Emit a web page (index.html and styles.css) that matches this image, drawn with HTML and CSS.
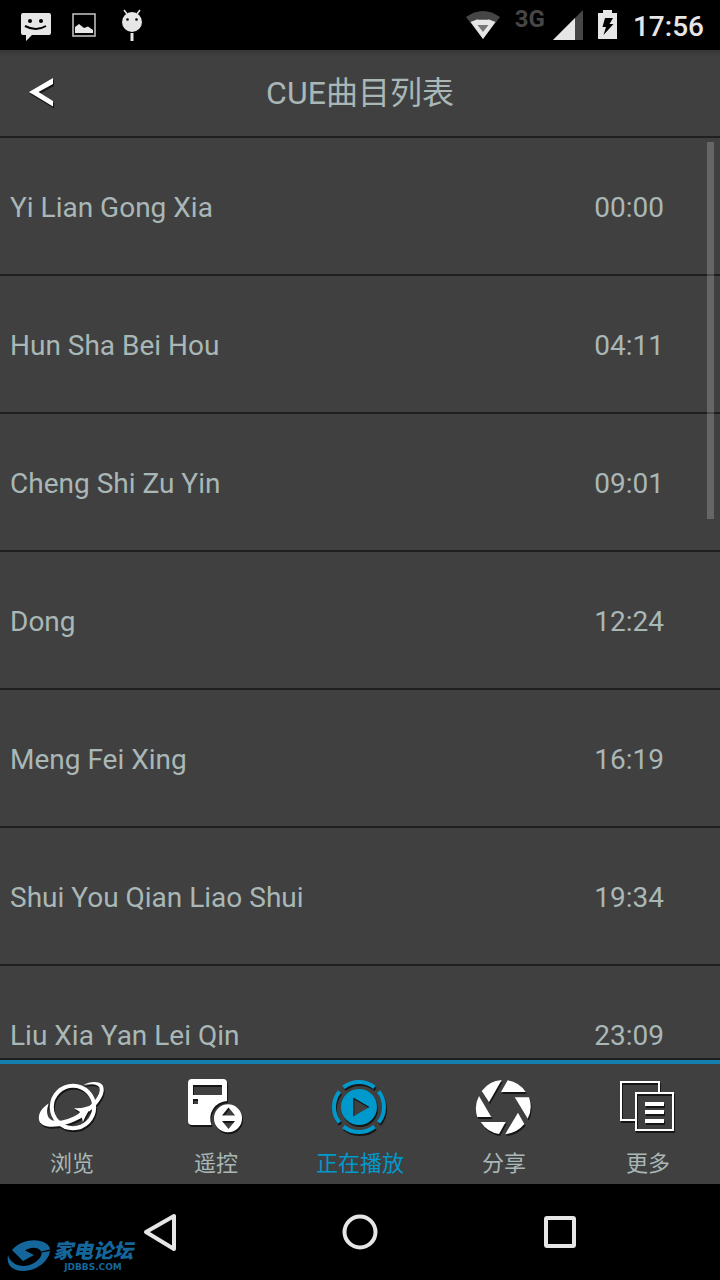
FILE: index.html
```html
<!DOCTYPE html>
<html lang="zh-CN">
<head>
<meta charset="utf-8">
<meta name="viewport" content="width=device-width, initial-scale=1">
<title>CUE曲目列表</title>
<link rel="stylesheet" href="styles.css">
</head>
<body>
<div class="screen">
  <div class="status">
    <div class="status-group">
      <svg width="32" height="30" viewBox="0 0 32 30" aria-hidden="true">
        <path fill="#e6e6e6" d="M3 3H29Q31 3 31 5V23Q31 25 29 25H12L6 31V25H3Q1 25 1 23V5Q1 3 3 3Z"/>
        <circle cx="10" cy="11" r="2"/><circle cx="21" cy="11" r="2"/>
        <path d="M5 16Q16 22 26 16" fill="none" stroke="#000" stroke-width="2"/>
      </svg>
      <svg width="24" height="30" viewBox="0 0 24 30" aria-hidden="true">
        <rect x="1" y="4" width="22" height="22" fill="none" stroke="#c8c8c8" stroke-width="1.5"/>
        <path fill="#e6e6e6" d="M3 23V17L7 14L12 18L16 16.500L21 20V23Z"/>
      </svg>
      <svg width="32" height="32" viewBox="0 0 32 32" aria-hidden="true">
        <path d="M8 1L11 5M24 1L21 5" stroke="#e6e6e6" stroke-width="1.500"/>
        <circle cx="16" cy="13" r="10" fill="#e6e6e6"/>
        <circle cx="11.500" cy="10.500" r="1.300"/><circle cx="20.500" cy="10.500" r="1.300"/>
        <path d="M16 24V32" stroke="#e6e6e6" stroke-width="3"/>
      </svg>
    </div>
    <div class="status-group">
      <svg width="34" height="30" viewBox="0 0 34 30" aria-hidden="true">
        <path fill="#464646" d="M0 7Q17-5 34 7L17 29Z"/>
        <path fill="#e6e6e6" d="M4.500 12L11 9.500H23L29.500 12L17 29Z"/>
        <path fill="#464646" d="M17 3L22 9.500H12Z"/>
        <path fill="#777" d="M11.500 15H22.500L17 22Z"/>
      </svg>
      <div class="signal">
        <span class="network">3G</span>
        <svg width="30" height="30" viewBox="0 0 30 30" aria-hidden="true">
          <path fill="#464646" d="M30 0V30H0Z"/><path fill="#e6e6e6" d="M22 8V30H0Z"/>
        </svg>
      </div>
      <svg width="20" height="30" viewBox="0 0 20 30" aria-hidden="true">
        <path fill="#e6e6e6" d="M5 0H14V3H19V29H0V3H5Z"/>
        <path d="M7 8H15L11.500 14H15.500L5.500 25L8 17H4.500Z"/>
      </svg>
      <time class="clock">17:56</time>
    </div>
  </div>

  <header class="header">
    <button class="back" type="button" aria-label="返回">
      <svg width="28" height="30" viewBox="0 0 28 30" aria-hidden="true">
        <path fill="#fff" d="M24 0V6L9.500 14L24 23V28.500L0 14Z"/>
      </svg>
    </button>
    <h1 class="title">CUE曲目列表</h1>
  </header>

  <main class="content">
    <ul class="tracks">
      <li class="track"><span>Yi Lian Gong Xia</span><time>00:00</time></li>
      <li class="track"><span>Hun Sha Bei Hou</span><time>04:11</time></li>
      <li class="track"><span>Cheng Shi Zu Yin</span><time>09:01</time></li>
      <li class="track"><span>Dong</span><time>12:24</time></li>
      <li class="track"><span>Meng Fei Xing</span><time>16:19</time></li>
      <li class="track"><span>Shui You Qian Liao Shui</span><time>19:34</time></li>
      <li class="track"><span>Liu Xia Yan Lei Qin</span><time>23:09</time></li>
    </ul>
    <div class="scrollbar"></div>
  </main>

  <nav class="tabs">
    <button class="tab" type="button">
      <svg class="tab-icon" viewBox="0 0 64 64" aria-hidden="true">
        <circle cx="33" cy="31" r="21.200" fill="none" stroke="#fff" stroke-width="4"/>
        <path fill="#fff" d="M8.500 27.500C0 33-2.500 40-.5 45.500C4 54 24 52 43 41L40 37C28 45 14 47 10 43C6 39 7 33 8.500 27.500Z"/>
        <path fill="none" stroke="#fff" stroke-width="4" d="M48 34C58 26 64 16 61 10.500"/>
        <path fill="#fff" d="M43.500 9C50 5 60 5 62.800 9.500L60.500 13C58 7.500 51 7.500 43.500 9Z"/>
        <path fill="#fff" d="M34 32Q44 33 54 28Q47 36 43 46L41.500 40.500L37 40L40 36Z"/>
      </svg>
      <span>浏览</span>
    </button>
    <button class="tab" type="button">
      <svg class="tab-icon" viewBox="0 0 64 64" aria-hidden="true">
        <path fill="#fff" fill-rule="evenodd" d="M8 3H39Q43 3 43 7V25A17.500 17.500 0 0 0 27.500 49H8Q4 49 4 45V7Q4 3 8 3ZM9 9V19H38V9ZM9 23V28H14V23Z"/>
        <path fill="#fff" fill-rule="evenodd" d="M44 28.300a14 14 0 1 1 0 28a14 14 0 1 1 0-28ZM44.500 31.500L38 39.500H51ZM38 45L44.500 53L51 45Z"/>
      </svg>
      <span>遥控</span>
    </button>
    <button class="tab tab-active" type="button" aria-current="page">
      <svg class="tab-icon" viewBox="0 0 64 64" aria-hidden="true">
        <circle cx="31" cy="31" r="25" fill="none" stroke="#0099cc" stroke-width="4" pathLength="360" stroke-dasharray="77 13" stroke-dashoffset="38.500"/>
        <path fill="#0099cc" fill-rule="evenodd" d="M31 13a18 18 0 1 1 0 36a18 18 0 1 1 0-36ZM25.300 21.500V40.500L41.500 31Z"/>
      </svg>
      <span>正在播放</span>
    </button>
    <button class="tab" type="button">
      <svg class="tab-icon" viewBox="0 0 64 64" aria-hidden="true">
        <g fill="#fff">
          <path d="M9.700 15A27 27 0 0 1 29.700 4L17 26.300Z"/>
          <path d="M35.700 4.300A27 27 0 0 1 53.700 16H29Z"/>
          <path d="M42.700 21.300H57A27 27 0 0 1 55.700 42.700Z"/>
          <path d="M46 36.700L52.300 48A27 27 0 0 1 33.300 58Z"/>
          <path d="M8.700 46H33.700L27 58A27 27 0 0 1 8.700 46Z"/>
          <path d="M7 20L19.300 41H5.300A27 27 0 0 1 7 20Z"/>
        </g>
      </svg>
      <span>分享</span>
    </button>
    <button class="tab" type="button">
      <svg class="tab-icon" viewBox="0 0 64 64" aria-hidden="true">
        <path fill="none" stroke="#fff" stroke-width="2" d="M19 44H5V6H43V16M20 17H57V54H20Z"/>
        <path fill="#fff" d="M29 26H48V30H29ZM29 34H48V38H29ZM29 43H48V47H29Z"/>
      </svg>
      <span>更多</span>
    </button>
  </nav>

  <div class="system">
    <button class="system-key" type="button" aria-label="Back">
      <svg width="36" height="40" viewBox="0 0 36 40" aria-hidden="true">
        <path fill="none" stroke="#e6e6e6" stroke-width="4" stroke-linejoin="round" d="M32 4V37L4 20Z"/>
      </svg>
    </button>
    <button class="system-key" type="button" aria-label="Home">
      <svg width="36" height="36" viewBox="0 0 36 36" aria-hidden="true">
        <circle cx="18" cy="18" r="15.500" fill="none" stroke="#e6e6e6" stroke-width="4"/>
      </svg>
    </button>
    <button class="system-key" type="button" aria-label="Recent apps">
      <svg width="32" height="32" viewBox="0 0 32 32" aria-hidden="true">
        <rect x="2" y="2" width="28" height="28" rx="1" fill="none" stroke="#e6e6e6" stroke-width="4" stroke-linejoin="round"/>
      </svg>
    </button>
    <div class="watermark">
      <svg width="42" height="32" viewBox="0 0 42 32" aria-hidden="true">
        <path fill="#14669b" d="M4 10C12 1 24-1 32 1C40 3 42 7 42 9.500L33 11.500C31 6.500 22 7 17 10.500L26 15L15 21Z"/>
        <path fill="#14669b" d="M0 15C3 26 16 28 24 24C31 20.500 34 16 33.500 12.500L42 11C41 20 30 30.500 16 31C4 31-2 25 0 15Z"/>
      </svg>
      <div class="watermark-text">
        <span class="watermark-name">家电论坛</span>
        <span class="watermark-site">JDBBS.COM</span>
      </div>
    </div>
  </div>
</div>
</body>
</html>
```
FILE: styles.css
```css
* {
  box-sizing: border-box;
}

body {
  margin: 0;
  background: #000;
  color: #a9b7b7;
  font-family: Roboto, "Noto Sans CJK SC", sans-serif;
}

button {
  padding: 0;
  border: 0;
  background: none;
  color: inherit;
  font: inherit;
}

svg {
  display: block;
  flex: none;
  overflow: visible;
}

.screen {
  display: flex;
  flex-direction: column;
  height: 100vh;
}

.status {
  display: flex;
  justify-content: space-between;
  flex: none;
  height: 50px;
  padding: 0 16px 0 20px;
  background: #000;
}

.status-group {
  display: flex;
  align-items: center;
  gap: 20px;
}

.status-group + .status-group {
  gap: 15px;
}

.signal {
  display: flex;
  gap: 8px;
}

.network {
  color: #464646;
  font-size: 24px;
  font-weight: 700;
  line-height: 18px;
}

.clock {
  padding-top: 4px;
  color: #e6e6e6;
  font-size: 28px;
  font-weight: 500;
  line-height: 32px;
}

.header {
  display: grid;
  grid-template-columns: 80px 1fr 80px;
  align-items: center;
  flex: none;
  height: 88px;
  border-bottom: 2px solid #1f1f1f;
  background: linear-gradient(#383838, #404040 8px);
}

.back {
  padding-left: 29px;
}

.back svg,
.tab-icon {
  filter: drop-shadow(1px 2px 0 #161616);
}

.title {
  margin: 0;
  font-size: 32px;
  font-weight: 400;
  line-height: 40px;
  text-align: center;
}

.content {
  position: relative;
  flex: 1;
  min-height: 0;
  overflow: hidden;
  border-bottom: 2px solid #1f1f1f;
  background: #404040;
}

.tracks {
  margin: 0;
  padding: 0;
  list-style: none;
}

.track {
  display: flex;
  align-items: center;
  justify-content: space-between;
  height: 138px;
  padding: 4px 56px 0 10px;
  border-bottom: 2px solid #1f1f1f;
  font-size: 28px;
  line-height: 36px;
}

.scrollbar {
  position: absolute;
  top: 4px;
  right: 6px;
  width: 7px;
  height: 41%;
  background: rgba(255, 255, 255, 0.2);
}

.tabs {
  display: grid;
  grid-template-columns: repeat(5, 1fr);
  flex: none;
  border-top: 4px solid #137fac;
  background: #404040;
}

.tab {
  display: flex;
  flex-direction: column;
  align-items: center;
  gap: 8px;
  padding: 12px 0 4px;
  font-size: 22px;
  line-height: 32px;
}

.tab-active {
  color: #0099cc;
}

.tab-icon {
  width: 64px;
  height: 64px;
}

.system {
  position: relative;
  display: grid;
  grid-template-columns: repeat(3, 1fr);
  flex: none;
  height: 96px;
  padding: 0 60px;
  background: #000;
}

.system-key {
  display: flex;
  align-items: center;
  justify-content: center;
}

.watermark {
  position: absolute;
  bottom: 8px;
  left: 8px;
  display: flex;
  align-items: flex-end;
  gap: 3px;
  color: #14669b;
}

.watermark-text {
  display: flex;
  flex-direction: column;
  gap: 2px;
}

.watermark-name {
  font-size: 20px;
  font-style: italic;
  font-weight: 900;
  line-height: 20px;
}

.watermark-site {
  font-family: "DejaVu Sans", sans-serif;
  font-size: 9px;
  font-weight: 700;
  line-height: 9px;
  text-align: center;
}
```
